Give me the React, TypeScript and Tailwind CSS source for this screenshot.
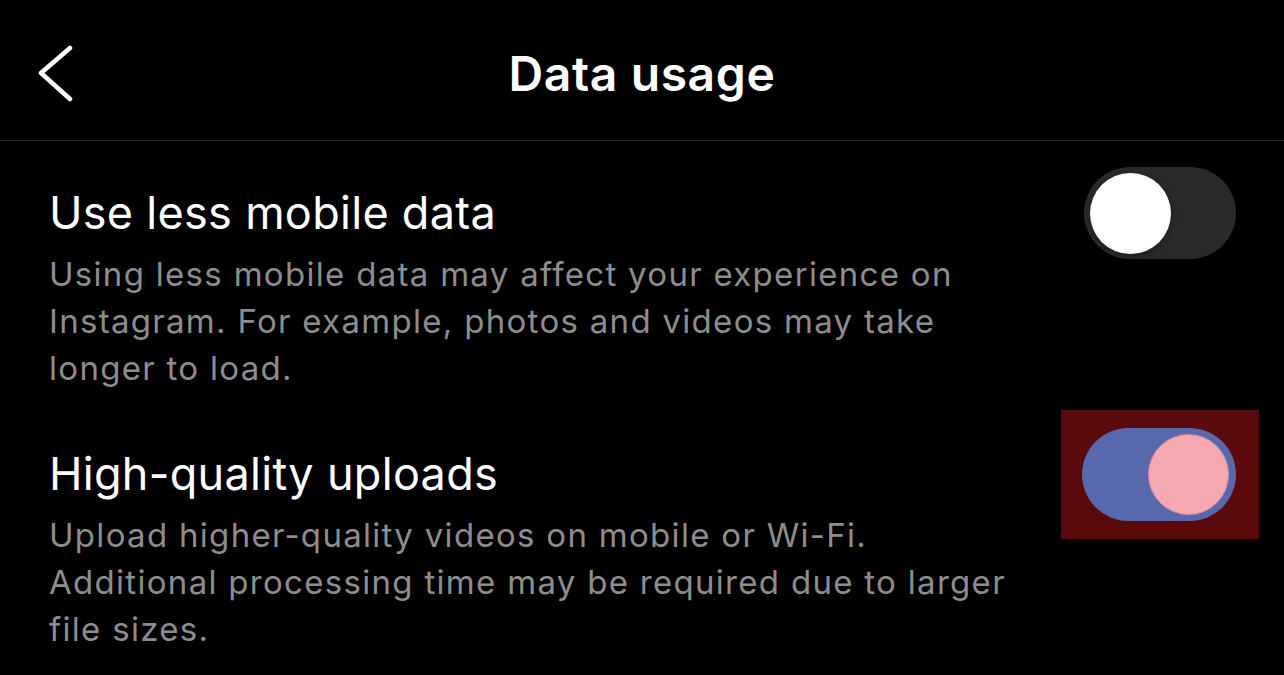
import React, { useState } from 'react';

const font = { fontFamily: 'Inter, "Noto Sans", sans-serif' };

const BackIcon = () => (
    <svg width="40" height="60" viewBox="0 0 40 60" fill="none">
        <path d="M32 4 L3 29 L32 55" stroke="white" strokeWidth="4.5" strokeLinecap="round" strokeLinejoin="round" />
    </svg>
);

type ToggleProps = { on: boolean; onClick: () => void };

const Toggle = ({ on, onClick }: ToggleProps) => (
    <button
        onClick={onClick}
        className={
            on
                ? 'w-[154px] h-[93px] rounded-full bg-[#5868ac] flex items-center justify-end px-[7px]'
                : 'w-[152px] h-[92px] rounded-full bg-[#2a2a2c] flex items-center justify-start px-[6px]'
        }
    >
        <span
            className={
                on
                    ? 'w-[81px] h-[81px] rounded-full bg-[#f5a8af] border border-[#d98f9c]'
                    : 'w-[81px] h-[81px] rounded-full bg-white shadow-[0_2px_6px_rgba(0,0,0,0.35)]'
            }
        />
    </button>
);

type RowProps = {
    title: string;
    lines: string[];
    toggle: React.ReactNode;
};

const SettingRow = ({ title, lines, toggle }: RowProps) => (
    <div className="flex items-start">
        <div className="flex-1">
            <div className="text-[45px] leading-[60px] text-white tracking-[0.3px]">{title}</div>
            <div className="mt-[8px] text-[33px] leading-[47px] text-[#8d8d8d] tracking-[1.3px]">
                {lines.map((l) => (
                    <div key={l}>{l}</div>
                ))}
            </div>
        </div>
        <div className="h-[60px] flex items-center">{toggle}</div>
    </div>
);

const App: React.FC = () => {
    const [lessData, setLessData] = useState(false);
    const [highQuality, setHighQuality] = useState(true);

    return (
        <div className="w-[1284px] h-[675px] bg-black overflow-hidden antialiased" style={font}>
            <header className="h-[141px] pt-2 border-b border-[#262626] grid grid-cols-[1fr_auto_1fr] items-center">
                <div className="pl-[38px] flex items-center">
                    <BackIcon />
                </div>
                <h1 className="text-[48px] font-semibold text-white tracking-[0.6px]">Data usage</h1>
                <div />
            </header>

            <main className="pl-[49px] pr-[48px] pt-[42px] flex flex-col gap-[52px]">
                <SettingRow
                    title="Use less mobile data"
                    lines={[
                        'Using less mobile data may affect your experience on',
                        'Instagram. For example, photos and videos may take',
                        'longer to load.',
                    ]}
                    toggle={<Toggle on={lessData} onClick={() => setLessData(!lessData)} />}
                />
                <SettingRow
                    title="High-quality uploads"
                    lines={[
                        'Upload higher-quality videos on mobile or Wi-Fi.',
                        'Additional processing time may be required due to larger',
                        'file sizes.',
                    ]}
                    toggle={
                        <div className="-ml-[21px] -mr-[23px] -my-[18px] pl-[21px] pr-[23px] py-[18px] bg-[#5a0a0c] flex">
                            <Toggle on={highQuality} onClick={() => setHighQuality(!highQuality)} />
                        </div>
                    }
                />
            </main>
        </div>
    );
};

export default App;
